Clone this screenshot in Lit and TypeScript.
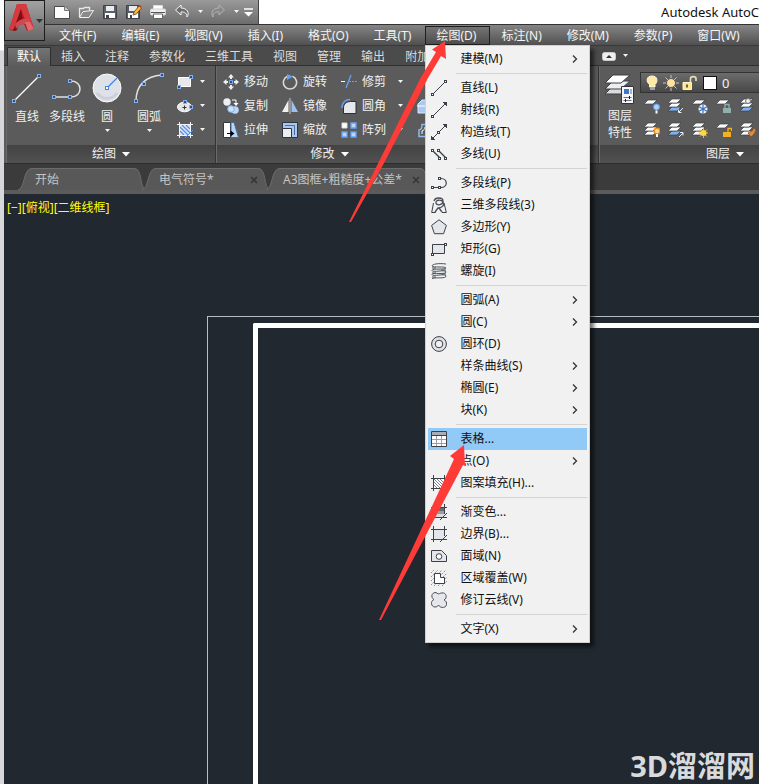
import { LitElement, html, css, svg, nothing, TemplateResult } from "lit";
import { customElement } from "lit/decorators.js";
import { classMap } from "lit/directives/class-map.js";

const icon = (w: number, h: number, body: unknown) =>
  html`<svg class="ic" width=${w} height=${h} viewBox="0 0 ${w} ${h}" aria-hidden="true">${body}</svg>`;

const node = (x: number, y: number) =>
  svg`<rect x=${x - 1.5} y=${y - 1.5} width="3" height="3" fill="#454b55" stroke="#7db2ff"/>`;
const pin = (x: number, y: number) =>
  svg`<rect x=${x - 1.5} y=${y - 1.5} width="2" height="2" fill="#fff" stroke="#3c4149"/>`;
const caret = icon(7, 4, svg`<path d="M1 0h5L3.500 3z" fill="#f4f4f4"/>`);
const bigCaret = icon(8, 5, svg`<path d="M0 0h8L4 4.500z" fill="#fff"/>`);

/* quick access toolbar */
const qat: Record<string, TemplateResult> = {
  新建: icon(16, 16, svg`<path d="M.5 2.500h10l5 4v8H.5z" fill="#fdfdfd" stroke="#4a4a4a"/><path d="M10.500 2.500v4h5" fill="#ccc" stroke="#777"/>`),
  打开: icon(16, 16, svg`<path d="M1.500 13V4.500h4l1-1h5v3" fill="none" stroke="#e8e8e8" stroke-width="1.300"/><path d="M1.500 13.500L5 7.500l10.500-1-4.500 7z" fill="#8a8a8a" stroke="#f2f2f2"/>`),
  保存: icon(16, 16, svg`<path d="M1.500 1.500h13v13h-13z" fill="#5a606a" stroke="#3e434b"/><path d="M4 2h8v5H4z" fill="#e9ebee"/><path d="M3 9h10v5H3z" fill="#fff"/><path d="M4 11h3v3H4z" fill="#444"/>`),
  另存为: icon(16, 16, svg`<path d="M.5 1.500h13v13H.5z" fill="#5a606a" stroke="#3e434b"/><path d="M3 2h8v5H3z" fill="#e9ebee"/><path d="M2 9h10v5H2z" fill="#fff"/><path d="M4 11h2v3H4z" fill="#444"/><path d="M7 11l1-3 5-6 2.500 2-5 6z" fill="#f8b53a" stroke="#6a4216" stroke-width=".8"/><path d="M13 2l2.500 2 .5-1.500L14 1z" fill="#d8482b"/>`),
  打印: icon(16, 16, svg`<path d="M3.500 5V1.500h9V5" fill="#fff" stroke="#ddd"/><rect x=".5" y="5" width="15" height="6" rx="1" fill="#f1f1f1" stroke="#d0d0d0"/><path d="M1 8.500h14" stroke="#555"/><path d="M3.500 10h9v4.500h-9z" fill="#fff" stroke="#666"/>`),
  放弃: icon(16, 16, svg`<path d="M7 1L1.500 6 7 11V8c4-.500 6 1.500 6 5 3-4 0-9-6-9z" fill="#6d6d6d" stroke="#f4f4f4" stroke-linejoin="round"/>`),
  重做: icon(16, 16, svg`<path d="M9 1l5.500 5L9 11V8c-4-.500-6 1.500-6 5-3-4 0-9 6-9z" fill="#888" stroke="#b2b2b2" stroke-linejoin="round"/>`),
};

/* drop-down menu */
const crop = (inner: unknown) =>
  icon(16, 16, svg`${inner}<path d="M0 3.500h16M0 13.500h16M2.500 0v16M13.500 0v10" fill="none" stroke="#3c4149"/>`);
const menuIcons: Record<string, TemplateResult> = {
  line: icon(16, 16, svg`<path d="M2 14L14 2" stroke="#3c4149"/>${pin(2, 15)}${pin(15, 2)}`),
  ray: icon(16, 16, svg`<path d="M2 14L14 2" stroke="#3c4149"/>${pin(2, 15)}<path d="M16 0v4l-4-4z" fill="#3c4149" stroke="#3c4149"/>`),
  xline: icon(16, 16, svg`<path d="M2 14L14 2" stroke="#3c4149"/>${pin(8, 9)}<path d="M16 0v4l-4-4zM0 16v-4l4 4z" fill="#3c4149" stroke="#3c4149"/>`),
  mline: icon(16, 16, svg`<path d="M2 5l7 7M8 5l7 7" stroke="#3c4149" stroke-width="1.400"/>${pin(2, 5)}${pin(8, 5)}${pin(9, 13)}${pin(15, 13)}`),
  pline: icon(16, 16, svg`<path d="M2 12.500h8c7 0 7-9 0-9H8.500" fill="none" stroke="#3c4149" stroke-width="1.200"/>${pin(2, 13)}${pin(9, 13)}${pin(9, 4)}`),
  poly3: icon(16, 16, svg`<path d="M2.500 6L.7 15.500h4M13 6l2.300 9.500H11" fill="none" stroke="#3c4149"/><path d="M3 4c1-4 9-4 9 0s-6 5-7 2 5-4 7-1-1 6-5 6l-3 4M8 11l3 4" fill="none" stroke="#4a4f57" stroke-width="1.300"/>`),
  polygon: icon(16, 16, svg`<path d="M8 .8L15.400 6.400 12.600 14.700H3.400L.6 6.400z" fill="#e4e6ec" stroke="#3c4149"/>`),
  rect: icon(16, 16, svg`<path d="M1.500 3.500h12v9h-12z" fill="#e4e6ec" stroke="#3c4149"/>${pin(15, 4)}${pin(2, 14)}`),
  helix: icon(16, 16, svg`<path d="M15 1C8 0 1 1 1 3s14 0 14 2S1 5 1 7.500 15 6 15 9 1 9 1 11.500 15 10 15 13 6 14 1 15.500M1 5h4M10 7h5M1 10h4M10 11h5M1 14h4" fill="none" stroke="#4b5058"/>`),
  donut: icon(16, 16, svg`<circle cx="8" cy="8" r="7.400" fill="#dfe1e6" stroke="#3c4149"/><circle cx="8" cy="8" r="3.800" fill="#f1f1f1" stroke="#3c4149"/>`),
  table: icon(16, 16, svg`<path d="M.5 .5h15v15H.5z" fill="#fff" stroke="#3c4149"/><path d="M1 1h14v3H1z" fill="#a9adb5"/><path d="M1 4.500h14" stroke="#3c4149"/><path d="M1 8.500h14M1 12.500h14M5.500 5v10M10.500 5v10" stroke="#9a9ea6"/>`),
  hatch: crop(svg`<path d="M3 4h10v9H3z" fill="#fff"/><path d="M3 10l3 3M3 7l6 6M3 4l9 9M6 4l7 7M9 4l4 4" stroke="#7a7f88"/>`),
  gradient: crop(svg`<path d="M3 4h10v3H3z" fill="#666b74"/><path d="M3 7h10v3H3z" fill="#9a9da4"/><path d="M3 10h10v3H3z" fill="#d8dae0"/><path d="M9 16l7-7" stroke="#3c4149"/>`),
  boundary: crop(svg`<path d="M3 4h10v9H3z" fill="#e2e5ea"/><path d="M9 16l7-7" stroke="#3c4149"/>`),
  region: icon(16, 16, svg`<path d="M.5 2.500h10l5 5v6H.5z" fill="#e4e6ec" stroke="#3c4149"/><circle cx="8" cy="8.500" r="2.800" fill="#fff" stroke="#3c4149"/>`),
  wipeout: icon(16, 16, svg`<path d="M0 3l3-3M0 7l7-7M0 11l11-11M0 15l15-15M3 16L16 3M7 16l9-9M11 16l5-5" stroke="#8b8f97" stroke-dasharray="2 1"/><path d="M3.500 3.500h6v4h4v6h-10z" fill="#fff" stroke="#3c4149"/>`),
  cloud: icon(16, 16, svg`<path d="M7 2C5-1 0 1 1 5c0 1 1 2 2 2.500C-1 9 0 15 4 15c2 0 3-1 3.500-2 2 4 9 3 8-2-.3-2-1.500-2.500-2.500-3C17 6 15 0 11 1 9 1 8 2 7 2z" fill="#e6e7ec" stroke="#4b5058"/>`),
};

interface Entry { t: string; i?: string; sub?: boolean; on?: boolean }
const menuGroups: Entry[][] = [
  [{ t: "建模(M)", sub: true }],
  [{ t: "直线(L)", i: "line" }, { t: "射线(R)", i: "ray" }, { t: "构造线(T)", i: "xline" }, { t: "多线(U)", i: "mline" }],
  [{ t: "多段线(P)", i: "pline" }, { t: "三维多段线(3)", i: "poly3" }, { t: "多边形(Y)", i: "polygon" }, { t: "矩形(G)", i: "rect" }, { t: "螺旋(I)", i: "helix" }],
  [{ t: "圆弧(A)", sub: true }, { t: "圆(C)", sub: true }, { t: "圆环(D)", i: "donut" }, { t: "样条曲线(S)", sub: true }, { t: "椭圆(E)", sub: true }, { t: "块(K)", sub: true }],
  [{ t: "表格...", i: "table", on: true }, { t: "点(O)", sub: true }, { t: "图案填充(H)...", i: "hatch" }],
  [{ t: "渐变色...", i: "gradient" }, { t: "边界(B)...", i: "boundary" }, { t: "面域(N)", i: "region" }, { t: "区域覆盖(W)", i: "wipeout" }, { t: "修订云线(V)", i: "cloud" }],
  [{ t: "文字(X)", sub: true }],
];
const menuBar = ["文件(F)", "编辑(E)", "视图(V)", "插入(I)", "格式(O)", "工具(T)", "绘图(D)", "标注(N)", "修改(M)", "参数(P)", "窗口(W)"];
const ribbonTabs = ["默认", "插入", "注释", "参数化", "三维工具", "视图", "管理", "输出", "附加"];

/* draw panel */
const drawTools = [
  { t: "直线", more: false, i: icon(30, 30, svg`<path d="M2 28L27 3" stroke="#fff" stroke-width="1.200"/>${node(2, 28)}${node(27, 3)}`) },
  { t: "多段线", more: false, i: icon(32, 30, svg`<path d="M3 24h17c12 0 12-16 0-16h-1" fill="none" stroke="#e2e2e2" stroke-width="1.500"/>${node(3, 24)}${node(19, 24)}${node(19, 8)}`) },
  { t: "圆", more: true, i: icon(30, 30, svg`<circle cx="15" cy="15" r="14" fill="#dfe1e8" stroke="#fbfbfb"/><path d="M5 20a12 12 0 0 0 20 0" fill="none" stroke="#cdd0d9" stroke-width="3"/><path d="M15 15L25 5" stroke="#3f86e8" stroke-width="1.200"/><rect x="13.500" y="13.500" width="3" height="3" fill="#fff" stroke="#3f86e8"/>`) },
  { t: "圆弧", more: true, i: icon(30, 30, svg`<path d="M2 28C2 12 12 3 28 2" fill="none" stroke="#e2e2e2" stroke-width="1.500"/>${node(2, 28)}${node(10, 11)}${node(28, 2)}`) },
];
const drawSmall = [
  ["矩形", icon(16, 16, svg`<path d="M1.500 3.500h12v9h-12z" fill="#e7e8ec" stroke="#fff"/>${node(14, 3)}${node(2, 13)}`)],
  ["椭圆", icon(16, 16, svg`<ellipse cx="7.500" cy="9" rx="7" ry="4.800" fill="#e3e5ea" stroke="#fff"/><path d="M5.500 9.500h4M7.500 7.500v4" stroke="#333"/>${node(8, 4)}${node(14, 9)}`)],
  ["填充", icon(16, 16, svg`<path d="M3 3h10v10H3z" fill="#dfe9fa"/><path d="M3 9l4 4M3 5l8 8M5 3l8 8M9 3l4 4" stroke="#5c8fdd" stroke-width="1.300"/><path d="M0 2.500h16M0 13.500h16M2.500 0v16M13.500 0v16" stroke="#f1f1f1"/><path d="M8 16l8-8" stroke="#4f94f5"/>`)],
] as [string, TemplateResult][];

/* modify panel */
const modifyTools = [
  ["移动", false, icon(16, 16, svg`<path d="M8 0l3 3.500H9V5H7V3.500H5zM8 16l3-3.500H9V11H7v1.500H5zM0 8l3.500-3v2H5v2H3.500v2zM16 8l-3.500-3v2H11v2h1.500v2z" fill="#eceef2"/><rect x="6.500" y="6.500" width="3" height="3" fill="#4a4f58" stroke="#6aa5fa"/>`)],
  ["旋转", false, icon(16, 16, svg`<path d="M10.500 2.300A6.600 6.600 0 1 1 5.500 2.300" fill="none" stroke="#d6d8dc" stroke-width="1.600"/><path d="M5 0l6 2.500L5 6z" fill="#63a3f7"/>`)],
  ["修剪", true, icon(16, 16, svg`<path d="M0 7.500h4" stroke="#fff"/><path d="M5 14L10 1" stroke="#63a3f7" stroke-width="1.300"/><path d="M8 7.500h8" stroke="#63a3f7" stroke-dasharray="2 1"/>`)],
  ["复制", false, icon(16, 16, svg`<circle cx="4" cy="4" r="3.700" fill="#eceef2"/><path d="M9 2h4v4" fill="none" stroke="#fff"/><path d="M10.500 5h5L13 8z" fill="#fff"/><circle cx="12" cy="12" r="3.800" fill="#bdd6f7"/><circle cx="8" cy="11" r="3.300" fill="#cfe1fa" stroke="#7eb0ef"/>`)],
  ["镜像", false, icon(16, 16, svg`<path d="M6.500 2v12H0z" fill="#f1f1f3"/><path d="M9.500 2v12H16z" fill="#9cc2f2"/><path d="M8 0v16" stroke="#ccc"/>`)],
  ["圆角", true, icon(16, 16, svg`<path d="M2.500 15.500V10c0-4 3-6.500 7-6.500h5.500v12z" fill="#e6e8ec" stroke="#2c2f34"/><path d="M1 10C1 4 5 1.500 9 1.500" fill="none" stroke="#63a3f7" stroke-width="1.600"/>`)],
  ["拉伸", false, icon(16, 16, svg`<path d="M.5 .5h7v15h-7z" fill="#fff" stroke="#33373d"/><path d="M8 .5h3l4.500 15H8z" fill="#b9d5f8" stroke="#4a6d9c"/><path d="M4 11.500h5" stroke="#000"/><path d="M7.500 8.500l4 3-4 3z" fill="#000"/>`)],
  ["缩放", false, icon(16, 16, svg`<path d="M.5 .5h15v15H.5z" fill="#a9c8f2" stroke="#30343b"/><path d="M.5 6.500h9v9h-9z" fill="#eceef2" stroke="#30343b"/><path d="M3 3.500h9.500V13" fill="none" stroke="#4f6da0"/>`)],
  ["阵列", true, icon(16, 16, svg`<path d="M1 1h5v5H1z" fill="#fff" stroke="#ddd"/><path d="M10 1h5v5h-5zM1 10h5v5H1zM10 10h5v5h-5z" fill="#bdd6f7" stroke="#63a3f7" stroke-width="1.300"/>`)],
] as [string, boolean, TemplateResult][];
const modifyEdge = [
  ["分解", icon(14, 16, svg`<path d="M1 6l4-4h9v10l-4 3H1z" fill="#a9c8f2" stroke="#dfeafa"/><path d="M0 8h14" stroke="#fff"/>`)],
  ["偏移", icon(14, 16, svg`<path d="M2 14.500V8C4 8 5 6 5 2.500h8v12z" fill="none" stroke="#8db8f3" stroke-width="1.500"/><path d="M5 12V9c2-1 3-2 3-4h5" fill="none" stroke="#fff"/>`)],
] as [string, TemplateResult][];

/* layer panel */
const sheet = (y: number, fill = "#fbfbfb") =>
  svg`<path d="M4 ${y}h9l-4 4H0z" fill=${fill} stroke="#3b3f45" stroke-width=".7"/>`;
const stack = (extra: unknown, last = "#fbfbfb") => icon(16, 16, svg`${sheet(9, last)}${sheet(5)}${sheet(1)}${extra}`);
const single = (extra: unknown) => icon(16, 16, svg`${sheet(2)}${extra}`);
const padlock = (c: string, open: boolean) =>
  svg`<path d="M7 10h8v5H7z" fill=${c}/><path d=${open ? "M12 10V6.500h3.500V9" : "M9 10V6.500h4V10"} fill="none" stroke=${c} stroke-width="1.300"/>`;
const layerTools = [
  ["关闭图层", single(svg`<circle cx="12.500" cy="9" r="3" fill="#aed2fb" stroke="#5b9df0"/><path d="M12.500 12.500v3" stroke="#fff" stroke-width="2"/>`)],
  ["隔离", stack(svg`<path d="M15 10l-4 4M10.500 11.500v3h3" fill="none" stroke="#eee"/>`, "#7fb2f2")],
  ["冻结", single(svg`<circle cx="11" cy="11" r="4.500" fill="#eaf3ff"/><path d="M11 6.500v9M7 8.700l8 4.600M15 8.700l-8 4.600" stroke="#3b72b8" stroke-width="1.200"/>`)],
  ["锁定", single(padlock("#8fb0ac", false))],
  ["置为当前", stack(svg`<circle cx="8" cy="3" r="2.500" fill="#eee" stroke="#777"/>`, "#7fb2f2")],
  ["打开所有图层", stack(svg`<circle cx="13" cy="9" r="2.800" fill="#ffe2a0" stroke="#f08a16" stroke-width="1.500"/><path d="M13 12v3" stroke="#fff" stroke-width="2"/>`)],
  ["取消隔离", stack(svg`<path d="M11 15l4-4M12 10.500h3v3" fill="none" stroke="#eee"/>`, "#7fb2f2")],
  ["解冻", stack(svg`<path d="M11.500 6v10M6.500 11h10M8 7.500l7 7M15 7.500l-7 7" stroke="#f5b81d"/><circle cx="11.500" cy="11" r="3" fill="#ffd83a"/>`)],
  ["解锁", single(padlock("#f5b01e", true))],
  ["匹配", stack(svg`<path d="M8 11l4-2 2-3 2 2-2 4-3 3z" fill="#e08a3c" stroke="#8c4a17" stroke-width=".7"/>`)],
] as [string, TemplateResult][];
const layerBig = icon(32, 32, svg`
  <path d="M9 14h17l-9 8H1z" fill="#dcdcdc" stroke="#3b3f45"/><path d="M9 9h17l-9 8H1z" fill="#eee" stroke="#3b3f45"/>
  <path d="M9 3h17l-9 8H1z" fill="#fff" stroke="#3b3f45"/><path d="M17.500 14.500h12v17h-12z" fill="#f4f6fa" stroke="#30343b"/>
  <path d="M20 17h5v5h-5z" fill="#3f78c9"/><path d="M27 17v5M19.500 25.500h8M19.500 28.500h8" stroke="#6a6f78"/><path d="M25.500 24v3M21.500 27v3" stroke="#222"/>`);
const bulb = icon(16, 16, svg`<path d="M8 1c6 0 6 6 3 8.500V12H5.500V9.500C2 7 2 1 8 1z" fill="#ffe9a3" stroke="#fff6d6"/><path d="M6 12h5v3H6z" fill="#9da3ad"/>`);
const sun = icon(16, 16, svg`<path d="M8 0v16M0 8h16M2.500 2.500l11 11M13.500 2.500l-11 11" stroke="#c8c8c8"/><circle cx="8" cy="8" r="4.500" fill="#ffe0a0" stroke="#5b5b5b"/>`);
const openLock = icon(16, 16, svg`<path d="M1 7.500h8.500v7H1z" fill="#ffe590" stroke="#fff3c8"/><path d="M8.500 7V3.500C8.500 1 14 1 14 3.500V6" fill="none" stroke="#e9dfb6" stroke-width="1.600"/><path d="M5 9.500v3" stroke="#333" stroke-width="1.500"/>`);
const logo = icon(38, 36, svg`
  <path d="M3 27L11 1h9l8 25-7 2-3-7-6 1-2 6z" fill="#b51d25"/>
  <path d="M11 1h9l8 25-6-2-7-18-6 20-6 1z" fill="#d63a3f"/>
  <path d="M15 6l-8 22 4-1 2-7 4-2z" fill="#7d0e15"/><path d="M9 21c4-5 9-6 14-5l2 6c-6-2-11-1-15 4z" fill="#cf4a50"/>
  <path d="M19 19l3 9 6-2-4-7z" fill="#e4676a"/>
  <path d="M30 16h7l-3.500 4z" fill="#2d3540"/>`);

const tabCapLeft = icon(14, 22, svg`<path d="M0 22C7 21 5 0 14 0V22z" fill="#585858"/><path d="M0 22C7 21 5 .5 14 .5" fill="none" stroke="#6c6c6c"/>`);
const tabCapRight = icon(12, 22, svg`<path d="M0 0C9 0 5 20 12 22H0z" fill="#585858"/><path d="M0 .5C9 .5 5 20 12 22" fill="none" stroke="#6c6c6c"/>`);

@customElement("app-root")
export class AppRoot extends LitElement {
  static styles = css`
    :host {
      display: flex; flex-direction: column; position: relative; min-height: 100vh; box-sizing: border-box;
      padding-left: 4px; overflow: hidden; background: linear-gradient(#fff 50px, #d6d7db 51px);
      font: 12px/16px "Noto Sans", "Noto Sans CJK SC", sans-serif; color: #f0f0f0;
    }
    * { box-sizing: border-box; }
    button, select { font: inherit; color: inherit; background: none; border: 0; padding: 0; margin: 0; }
    .ic { display: block; flex: none; }
    button { display: flex; align-items: center; white-space: nowrap; }

    .head { display: grid; grid-template-columns: 41px 1fr; grid-template-rows: 24px 22px; }
    .app { grid-area: 1 / 1 / 3 / 2; z-index: 1; height: 41px; align-self: start; justify-content: center;
      border: 1px solid #1c1c1c; background: linear-gradient(#a2a2a2, #686868); }
    .top { display: flex; align-items: center; background: #fff; }
    .qat { display: flex; align-items: center; height: 24px; padding: 0 4px 0 5px; border-right: 1px solid #444;
      background: linear-gradient(#9a9a9a, #6c6c6c); }
    .q { width: 24px; height: 24px; justify-content: center; }
    .q.slim { width: 12px; }
    .title { flex: 1; overflow: hidden; white-space: nowrap; text-align: right; font-size: 13px; color: #111; }
    .menubar { grid-area: 2 / 1 / 3 / 3; display: flex; padding: 1px 0 0 44px; border-top: 1px solid #333;
      border-bottom: 1px solid #3a3a3a; background: linear-gradient(#858585, #505050); }
    .slot { position: relative; }
    .mb { height: 19px; padding: 0 13px 0 10px; border: 1px solid transparent; color: #f4f4f4; }
    .mb.open { border-color: #1e1e1e; background: linear-gradient(#747474, #4d4d4d); }

    .menu { position: absolute; z-index: 5; top: 19px; left: 0; width: 165px; padding: 2px; color: #111;
      background: #f1f1f1; border: 1px solid #d0d0d0; box-shadow: 4px 4px 4px rgba(0, 0, 0, .55); }
    .mi { width: 100%; height: 22px; padding: 0 8px 0 3px; gap: 13px; }
    .mi.on { background: #91c9f7; }
    .mi .pic { width: 16px; }
    .mi .txt { flex: 1; text-align: left; }
    .sep { height: 1px; margin: 3px 0 3px 28px; border: 0; background: #d4d4d4; }

    .tabs { display: flex; height: 20px; padding: 1px 0 0 3px; background: #4b4b4b; border-bottom: 1px solid #303030; }
    .tab { height: 18px; padding: 0 9px; border: 1px solid transparent; border-bottom: 0; color: #dcdcdc; }
    .tab.on { height: 19px; background: linear-gradient(#747474, #5b5b5b); border-color: #2e2e2e; color: #fff; }
    .toggle { margin-left: 163px; gap: 6px; }

    .ribbon { display: flex; height: 98px; background: #5b5b5b; border-bottom: 1px solid #2c2c2c; padding-left: 2px; }
    .panel { display: flex; flex-direction: column; flex: none; border: 1px solid #6a6a6a; border-width: 0 1px; border-right-color: #343434; }
    .draw { width: 210px; }
    .modify { width: 227px; }
    .notes { width: 156px; }
    .layers { min-width: 252px; flex: 1 0 auto; }
    .body { flex: 1; display: flex; align-items: flex-start; min-height: 0; }
    .cap { height: 18px; width: 100%; justify-content: center; gap: 6px; background: linear-gradient(#434343, #515151); }
    .bigs { display: grid; grid-template-columns: 40px 40px 40px 44px; padding-top: 7px; }
    .big { flex-direction: column; align-self: start; gap: 4px; }
    .big .ic + span { margin-top: 2px; }
    .smalls { display: grid; grid-template-rows: 24px 24px 24px; padding: 4px 0 0 6px; }
    .small { gap: 6px; }
    .mods { display: grid; grid-template: 24px 24px 24px / 59px 59px 76px; padding: 4px 0 0 6px; }
    .mod { gap: 5px; }
    .mod .more { margin-left: 6px; }
    .edge { display: grid; grid-template-rows: 24px 24px; padding-top: 28px; }
    .prop { flex-direction: column; width: 40px; padding-top: 6px; }
    .prop .ic { margin-bottom: 3px; }
    .prop span { line-height: 17px; }
    .lay { flex: 1; padding-top: 6px; }
    .layerbox { display: flex; align-items: center; gap: 3px; height: 21px; padding-left: 3px; color: #eef3ff;
      border: 1px solid #333; background: linear-gradient(#6c6c6c, #484848); }
    .swatch { width: 14px; height: 14px; margin: 0 2px; background: #fff; border: 1px solid #111; }
    .layerbox select { flex: 1; appearance: none; font-size: 13px; }
    .grid { display: grid; grid-template: 24px 24px / repeat(5, 24px); padding: 1px 0 0 4px; }

    .files { display: flex; align-items: flex-end; height: 30px; padding: 0 0 4px 14px; background: #3b3b3b;
      box-shadow: inset 0 -4px #5b5b5b; }
    .file { display: flex; height: 22px; margin-right: -4px; }
    .face { display: flex; align-items: center; gap: 8px; width: 102px; height: 22px; border-top: 1px solid #6c6c6c;
      background: #585858; color: #c4c4c4; white-space: nowrap; }
    .file.wide .face { width: 140px; }
    .face button:first-child { flex: 1; padding-left: 3px; }

    .canvas { flex: 1; display: flex; flex-direction: column; background: #212830; }
    .view { height: 122px; padding: 6px 3px; color: #ff0; }
    .outer { flex: 1; display: flex; margin-left: 203px; padding: 6px 0 0 45px; border: solid #b9bcc1; border-width: 1px 0 0 1px; }
    .inner { flex: 1; display: flex; align-items: flex-end; justify-content: flex-end; border: solid #fff; border-width: 5px 0 0 5px; border-top-left-radius: 2px; }
    .mark { padding-right: 4px; font: 700 29px/36px "Noto Sans", "Noto Sans CJK SC", sans-serif; color: #d9dadc; }
    .marks { position: absolute; z-index: 9; left: 0; top: 0; pointer-events: none; }
  `;

  private menu() {
    return html`<div class="menu" role="menu">
      ${menuGroups.map((g, n) => html`${n ? html`<hr class="sep" />` : nothing}${g.map((e) => html`
        <button class=${classMap({ mi: true, on: !!e.on })} role="menuitem">
          <span class="pic">${e.i ? menuIcons[e.i] : nothing}</span><span class="txt">${e.t}</span>
          ${e.sub ? icon(8, 10, svg`<path d="M2 1.500L5.500 5 2 8.500" fill="none" stroke="#333" stroke-width="1.300"/>`) : nothing}
        </button>`)}`)}
    </div>`;
  }

  private cap(t: string) {
    return html`<button class="cap">${t}${bigCaret}</button>`;
  }

  render() {
    return html`
      <header class="head">
        <button class="app" aria-label="应用程序菜单">${logo}</button>
        <div class="top">
          <div class="qat">
            ${Object.entries(qat).map(([k, v]) => html`<button class="q" aria-label=${k}>${v}</button>
              ${k === "放弃" || k === "重做" ? html`<button class="q slim" aria-label="${k}列表">${caret}</button>` : nothing}`)}
            <button class="q slim" aria-label="自定义">${icon(9, 9, svg`<path d="M0 1h9" stroke="#fff" stroke-width="1.500"/><path d="M0 4h9L4.500 8.500z" fill="#fff"/>`)}</button>
          </div>
          <div class="title">Autodesk AutoC</div>
        </div>
        <nav class="menubar">
          ${menuBar.map((m) => {
            const open = m.startsWith("绘图");
            return html`<div class="slot"><button class=${classMap({ mb: true, open })}>${m}</button>${open ? this.menu() : nothing}</div>`;
          })}
        </nav>
      </header>

      <nav class="tabs">
        ${ribbonTabs.map((t, n) => html`<button class=${classMap({ tab: true, on: n === 0 })}>${t}</button>`)}
        <button class="toggle" aria-label="最小化功能区">
          ${icon(14, 9, svg`<rect x=".5" y=".5" width="13" height="8" rx="2" fill="#f0f0f0" stroke="#ccc"/><path d="M4 6h6L7 3z" fill="#333"/>`)}${caret}
        </button>
      </nav>

      <section class="ribbon">
        <div class="panel draw">
          <div class="body">
            <div class="bigs">
              ${drawTools.map((d) => html`<button class="big">${d.i}<span>${d.t}</span>${d.more ? caret : nothing}</button>`)}
            </div>
            <div class="smalls">${drawSmall.map(([k, v]) => html`<button class="small" aria-label=${k}>${v}${caret}</button>`)}</div>
          </div>
          ${this.cap("绘图")}
        </div>
        <div class="panel modify">
          <div class="body">
            <div class="mods">
              ${modifyTools.map(([k, more, v]) => html`<button class="mod">${v}${k}${more ? html`<span class="more">${caret}</span>` : nothing}</button>`)}
            </div>
            <div class="edge">${modifyEdge.map(([k, v]) => html`<button aria-label=${k}>${v}</button>`)}</div>
          </div>
          ${this.cap("修改")}
        </div>
        <div class="panel notes"><div class="body"></div><div class="cap"></div></div>
        <div class="panel layers">
          <div class="body">
            <button class="prop">${layerBig}<span>图层</span><span>特性</span></button>
            <div class="lay">
              <div class="layerbox">${bulb}${sun}${openLock}<span class="swatch"></span>
                <select aria-label="图层"><option>0</option></select>
              </div>
              <div class="grid">${layerTools.map(([k, v]) => html`<button aria-label=${k}>${v}</button>`)}</div>
            </div>
          </div>
          ${this.cap("图层")}
        </div>
      </section>

      <nav class="files">
        ${["开始", "电气符号*", "A3图框+粗糙度+公差*"].map((t, n) => html`
          <div class=${classMap({ file: true, wide: n === 2 })}>${tabCapLeft}
            <div class="face"><button>${t}</button>
              ${n ? html`<button aria-label="关闭">${icon(8, 8, svg`<path d="M1 1l6 6M7 1L1 7" stroke="#363636" stroke-width="1.600"/>`)}</button>` : nothing}
            </div>${tabCapRight}
          </div>`)}
      </nav>

      <main class="canvas">
        <div class="view">[−][俯视][二维线框]</div>
        <div class="outer"><div class="inner"><div class="mark">3D溜溜网</div></div></div>
      </main>

      <svg class="marks" width="600" height="640" viewBox="0 0 600 640" aria-hidden="true">
        <g fill="#ff3b38">
          <path d="M445 41L432 49.500L436 52L420 79L349 222L351 222L383 165L428 78L441 56L446 59z"/>
          <path d="M464 445L450 456L454 459L379 620L381 620L463 465L465 466z"/>
        </g>
      </svg>
    `;
  }
}
